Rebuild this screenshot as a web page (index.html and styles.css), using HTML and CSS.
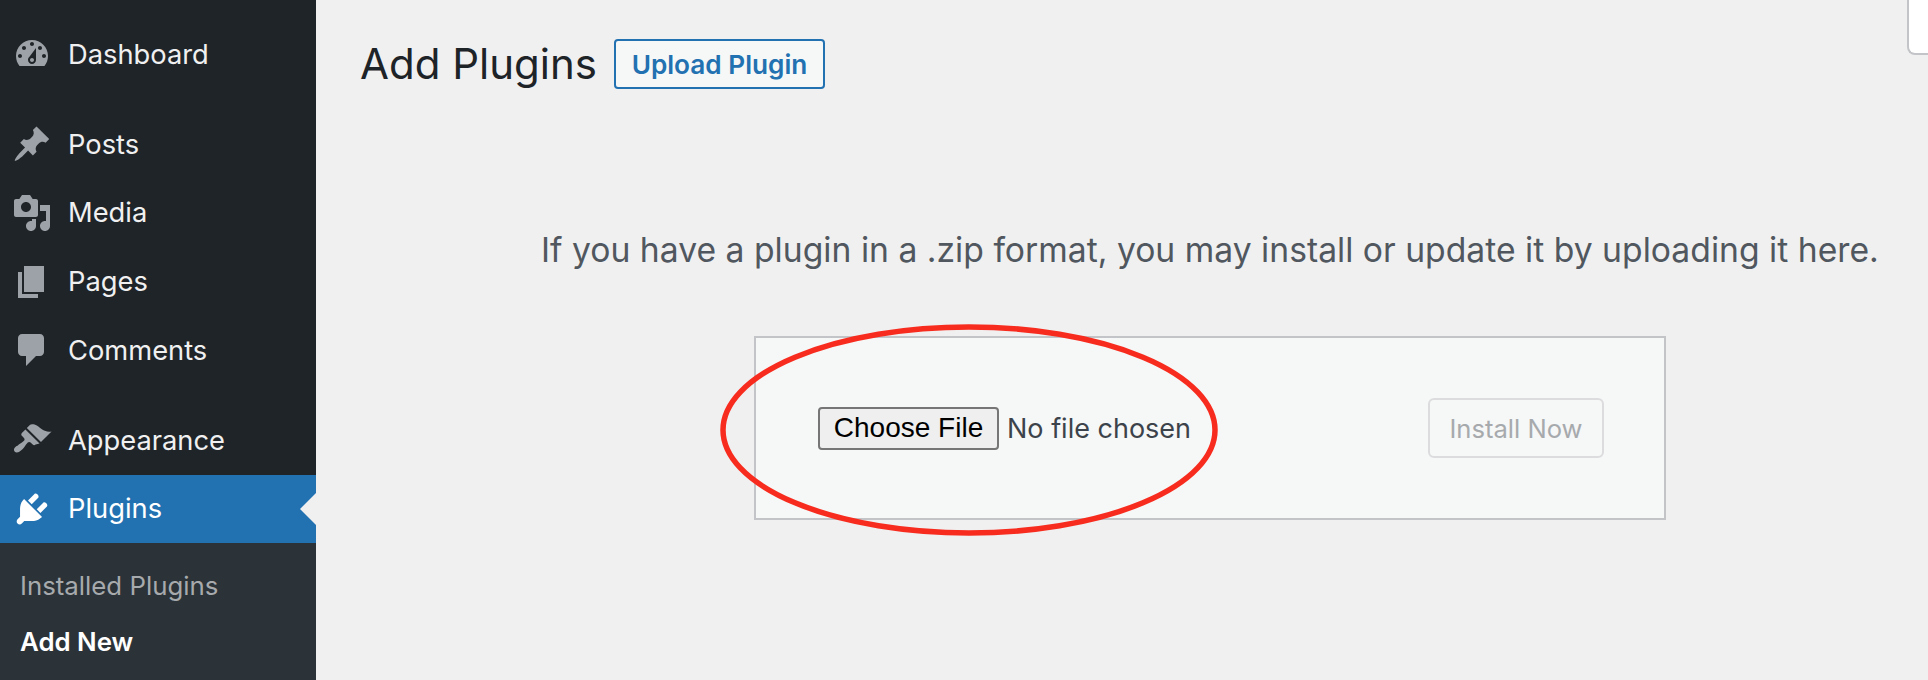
FILE: index.html
```html
<!DOCTYPE html>
<html lang="en">
<head>
  <meta charset="UTF-8" />
  <title>Add Plugins</title>
  <link rel="stylesheet" href="styles.css">
</head>

<body>
  <div class="sidebar">
    <a class="menu-item">
      <svg class="menu-icon" viewBox="0 0 20 20"><path fill-rule="evenodd" d="M3.76 16h12.48c1.1-1.37 1.76-3.11 1.76-5 0-4.42-3.58-8-8-8s-8 3.58-8 8c0 1.89.66 3.63 1.76 5zM10 4c.55 0 1 .45 1 1s-.45 1-1 1-1-.45-1-1 .45-1 1-1zM6 6c.55 0 1 .45 1 1s-.45 1-1 1-1-.45-1-1 .45-1 1-1zm8 0c.55 0 1 .45 1 1s-.45 1-1 1-1-.45-1-1 .45-1 1-1zm-5.37 5.55L12 7v6c0 1.1-.9 2-2 2s-2-.9-2-2c0-.57.24-1.08.63-1.45zM4 10c.55 0 1 .45 1 1s-.45 1-1 1-1-.45-1-1 .45-1 1-1zm12 0c.55 0 1 .45 1 1s-.45 1-1 1-1-.45-1-1 .45-1 1-1zm-5 3c0-.55-.45-1-1-1s-1 .45-1 1 .45 1 1 1 1-.45 1-1z"/></svg>
      Dashboard
    </a>
    <div class="menu-gap"></div>
    <a class="menu-item">
      <svg class="menu-icon" viewBox="0 0 20 20"><path d="M10.44 3.02l1.82-1.82 6.36 6.35-1.83 1.82c-1.05-.68-2.48-.57-3.41.36l-.75.75c-.92.93-1.04 2.35-.35 3.41l-1.83 1.82-2.41-2.41-2.8 2.79c-.42.42-3.38 2.71-3.8 2.29s1.86-3.39 2.28-3.81l2.79-2.79L4.1 9.36l1.83-1.82c1.05.69 2.48.57 3.41-.36l.75-.75c.93-.92 1.04-2.35.35-3.41z"/></svg>
      Posts
    </a>
    <a class="menu-item">
      <svg class="menu-icon" viewBox="0 0 20 20"><path fill-rule="evenodd" d="M13 11V4c0-.55-.45-1-1-1h-1.67L9 1H5L3.67 3H2c-.55 0-1 .45-1 1v7c0 .55.45 1 1 1h10c.55 0 1-.45 1-1zM7 4.5c1.38 0 2.5 1.12 2.5 2.5S8.38 9.5 7 9.5 4.5 8.38 4.5 7 5.62 4.5 7 4.5zM14 6h5v10.5c0 1.38-1.12 2.5-2.5 2.5S14 17.88 14 16.5s1.12-2.5 2.5-2.5c.17 0 .34.02.5.05V9h-3V6zm-4 8.05V13h2v3.5c0 1.38-1.12 2.5-2.5 2.5S7 17.88 7 16.5 8.12 14 9.5 14c.17 0 .34.02.5.05z"/></svg>
      Media
    </a>
    <a class="menu-item">
      <svg class="menu-icon" viewBox="0 0 20 20"><path d="M6 15V2h10v13H6zm-1 1h8v2H3V5h2v11z"/></svg>
      Pages
    </a>
    <a class="menu-item">
      <svg class="menu-icon" viewBox="0 0 20 20"><path d="M5 2h9c1.1 0 2 .9 2 2v7c0 1.1-.9 2-2 2h-2l-5 5v-5H5c-1.1 0-2-.9-2-2V4c0-1.1.9-2 2-2z"/></svg>
      Comments
    </a>
    <div class="menu-gap"></div>
    <a class="menu-item">
      <svg class="menu-icon" viewBox="0 0 20 20"><path d="M14.48 11.06L7.41 3.99l1.5-1.5c.5-.56 2.3-.47 3.51.32 1.21.8 1.43 1.28 2.91 2.1 1.18.64 2.45 1.26 4.45.85zm-.71.71L6.7 4.7 4.93 6.47c-.39.39-.39 1.02 0 1.41l1.06 1.06c.39.39.39 1.03 0 1.42-.6.6-1.43 1.11-2.21 1.69-.35.26-.7.53-1.01.84C1.43 13.23.4 14.84 1.4 15.84c.99 1 2.62-.04 3.96-1.38.31-.31.58-.66.84-1.01.58-.78 1.09-1.61 1.69-2.21.39-.39 1.02-.39 1.41 0l1.06 1.06c.39.39 1.02.39 1.41 0z"/></svg>
      Appearance
    </a>
    <a class="menu-item active">
      <svg class="menu-icon" viewBox="0 0 20 20"><path d="M13.11 4.36L9.87 7.6 8 5.73l3.24-3.24c.35-.34 1.05-.2 1.56.32.52.51.66 1.21.31 1.55zm-8 1.77l.91-1.12 9.01 9.01-1.19.84c-.71.71-2.63 1.16-3.82 1.16H6.14L4.9 17.26c-.59.59-1.54.59-2.12 0-.59-.58-.59-1.53 0-2.12l1.24-1.24v-3.88c0-1.13.4-3.19 1.09-3.89zm7.26 3.97l3.24-3.24c.34-.35 1.04-.21 1.55.31.52.51.66 1.21.31 1.55l-3.24 3.25z"/></svg>
      Plugins
    </a>
    <div class="submenu">
      <a class="submenu-item">Installed Plugins</a>
      <a class="submenu-item current">Add New</a>
    </div>
  </div>

  <div class="content">
    <div class="page-head">
      <h1>Add Plugins</h1>
      <a class="upload-link">Upload Plugin</a>
      <div class="screen-tab"></div>
    </div>

    <p class="upload-help">If you have a plugin in a .zip format, you may install or update it by uploading it here.</p>

    <div class="upload-box">
      <button class="file-button">Choose File</button>
      <span class="file-name">No file chosen</span>
      <button class="install-button" disabled>Install Now</button>

      <svg class="circle-mark" viewBox="0 0 504 216"><ellipse cx="252" cy="108" rx="246" ry="103"/></svg>
    </div>
  </div>
</body>
</html>
```

FILE: styles.css
```css
* {
  box-sizing: border-box;
}

html,
body {
  height: 100%;
}

body {
  margin: 0;
  display: flex;
  overflow: hidden;
  background-color: #f0f0f1;
  font-family: Inter, "Liberation Sans", sans-serif;
  color: #3c434a;
}

/* admin menu */
.sidebar {
  width: 316px;
  flex-shrink: 0;
  display: flex;
  flex-direction: column;
  padding-top: 20px;
  background-color: #1e2428;
}

.menu-item {
  position: relative;
  height: 68.75px;
  flex-shrink: 0;
  display: flex;
  align-items: center;
  gap: 16px;
  padding-left: 12px;
  font-size: 27.3px;
  color: #f0f0f1;
}

.menu-icon {
  width: 40px;
  height: 40px;
  fill: #9ca2a7;
}

.menu-gap {
  height: 21px;
  flex-shrink: 0;
}

.menu-item.active {
  background-color: #2271b1;
  color: #fff;
}

.menu-item.active .menu-icon {
  fill: #fff;
}

.menu-item.active::after {
  content: "";
  position: absolute;
  right: 0;
  top: 50%;
  margin-top: -16px;
  border: 16px solid transparent;
  border-left-width: 0;
  border-right-color: #f0f0f1;
}

.submenu {
  flex: 1;
  display: flex;
  flex-direction: column;
  padding: 23.75px 0 0 20px;
  gap: 18px;
  background-color: #2c3338;
}

.submenu-item {
  font-size: 25.8px;
  line-height: 38px;
  color: #a7aaad;
}

.submenu-item.current {
  font-weight: 600;
  color: #fff;
}

/* main area */
.content {
  flex: 1;
}

.page-head {
  display: flex;
  align-items: flex-start;
  padding-left: 44px;
}

h1 {
  margin: 36px 0 0;
  font-size: 42px;
  font-weight: 400;
  line-height: 56px;
  color: #1d2327;
}

.upload-link {
  margin: 39px 0 0 17px;
  width: 211px;
  height: 50px;
  display: flex;
  align-items: center;
  justify-content: center;
  border: 2px solid #2271b1;
  border-radius: 4px;
  background-color: #f6f7f7;
  font-size: 26.2px;
  font-weight: 600;
  color: #2271b1;
}

.screen-tab {
  margin-left: auto;
  width: 21px;
  height: 55px;
  border-left: 2px solid #c3c4c7;
  border-bottom: 2px solid #c3c4c7;
  border-bottom-left-radius: 8px;
  background-color: #fff;
}

.upload-help {
  margin: 135px 0 0 225px;
  font-size: 33.7px;
  line-height: 46px;
  white-space: nowrap;
  color: #50575e;
}

.upload-box {
  position: relative;
  margin: 63px 0 0 438px;
  width: 912px;
  height: 184px;
  display: flex;
  align-items: center;
  padding: 0 60px 0 62px;
  border: 2px solid #c3c4c7;
  background-color: #f6f7f7;
}

.file-button {
  width: 181px;
  height: 43px;
  padding: 0;
  border: 2px solid #767676;
  border-radius: 4px;
  background-color: #efefef;
  font-family: "Liberation Sans", sans-serif;
  font-size: 28px;
  color: #000;
}

.file-name {
  margin-left: 8px;
  font-size: 27px;
}

.install-button {
  margin-left: auto;
  width: 176px;
  height: 60px;
  padding: 0;
  border: 2px solid #dcdcde;
  border-radius: 6px;
  background-color: #f6f7f7;
  font-family: Inter, "Liberation Sans", sans-serif;
  font-size: 25.6px;
  color: #a7aaad;
}

.circle-mark {
  position: absolute;
  left: -39px;
  top: -16px;
  width: 504px;
  height: 216px;
  fill: none;
  stroke: #f72c1e;
  stroke-width: 5.5;
}
```
